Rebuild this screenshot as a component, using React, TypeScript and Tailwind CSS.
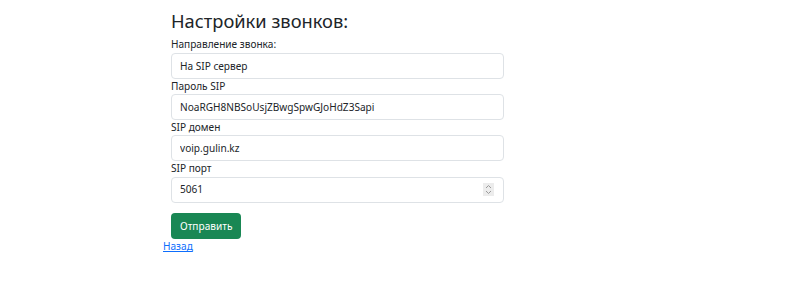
export default function App() {
  return (
    <div className="w-[800px] h-[305px] bg-white text-[#212529] font-['Noto_Sans',sans-serif]">
      <div className="pl-[163px] pt-[10px]">
        <form className="ml-[8px] w-[333px] flex flex-col" onSubmit={(e) => e.preventDefault()}>
          <h3 className="text-[18.3px] leading-[22px] font-normal mb-[5.4px]">Настройки звонков:</h3>

          <label className="text-[10.1px] leading-[15.33px]">Направление звонка:</label>
          <input
            type="text"
            defaultValue="На SIP сервер"
            className="h-[26px] w-full border border-[#dee2e6] rounded-[4px] px-[8px] text-[10.1px] outline-none"
          />

          <label className="text-[10.1px] leading-[15.33px]">Пароль SIP</label>
          <input
            type="text"
            defaultValue="NoaRGH8NBSoUsjZBwgSpwGJoHdZ3Sapi"
            className="h-[26px] w-full border border-[#dee2e6] rounded-[4px] px-[8px] text-[10.1px] outline-none"
          />

          <label className="text-[10.1px] leading-[15.33px]">SIP домен</label>
          <input
            type="text"
            defaultValue="voip.gulin.kz"
            className="h-[26px] w-full border border-[#dee2e6] rounded-[4px] px-[8px] text-[10.1px] outline-none"
          />

          <label className="text-[10.1px] leading-[15.33px]">SIP порт</label>
          <div className="h-[26px] w-full border border-[#dee2e6] rounded-[4px] pl-[8px] pr-[9px] flex items-center justify-between">
            <span className="text-[10.1px]">5061</span>
            <span className="w-[11px] h-[13px] bg-[#ececec] flex flex-col items-center justify-center">
              <svg width="7" height="11" viewBox="0 0 7 11" fill="none" stroke="#9a9a9a" strokeWidth="1">
                <path d="M1 4 L3.5 1.5 L6 4" />
                <path d="M1 7 L3.5 9.5 L6 7" />
              </svg>
            </span>
          </div>

          <div className="mt-[9px]">
            <button
              type="submit"
              className="h-[26px] px-[9px] rounded-[4px] bg-[#198754] text-white text-[10.1px]"
            >
              Отправить
            </button>
          </div>
        </form>
        <a href="#" className="block w-fit text-[10.1px] leading-[15px] text-[#0d6efd] underline">Назад</a>
      </div>
    </div>
  );
}
